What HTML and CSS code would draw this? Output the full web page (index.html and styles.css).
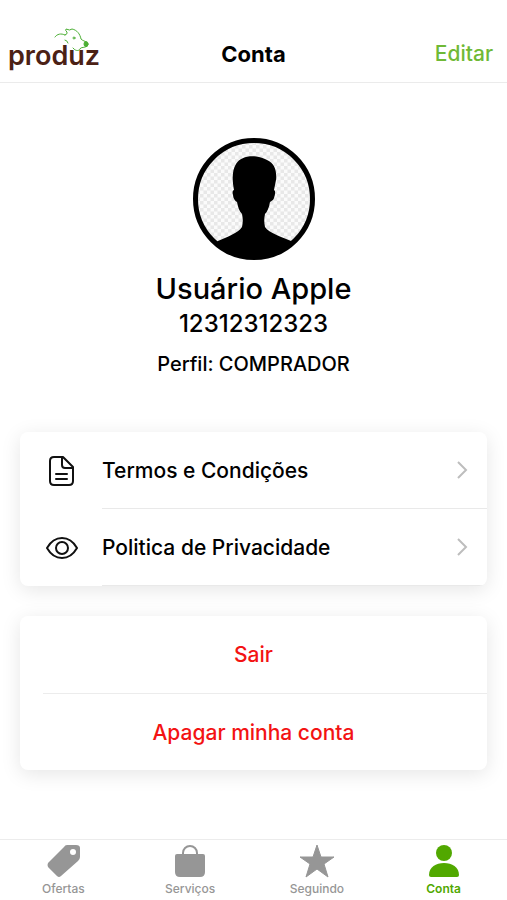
FILE: index.html
```html
<!DOCTYPE html>
<html lang="pt-BR">
<head>
<meta charset="utf-8">
<meta name="viewport" content="width=device-width, initial-scale=1">
<title>Conta</title>
<link rel="stylesheet" href="styles.css">
</head>
<body>
<header class="topbar">
  <div class="logo">
    <span class="logo-word">produz</span>
    <svg class="logo-mark" viewBox="0 0 36 26" aria-hidden="true">
      <path d="M1 10C3 7 7 6 11 8M11 8Q14 7 13 5Q11 4 12 2Q16 4 18 2C23 3 26 7 27 12C29 14 31 14 32 15L34 17Q34 20 31 20C28 21 27 20 26 22C25 24 22 24 20 22L19 21M11 13Q13 13 14 16"/>
      <circle cx="20" cy="11" r="1"/>
      <ellipse class="snout" cx="32" cy="17" rx="2" ry="2.500"/>
    </svg>
  </div>
  <h1 class="title">Conta</h1>
  <button class="edit" type="button">Editar</button>
</header>

<main class="content">
  <section class="profile">
    <svg class="avatar" viewBox="0 0 122 122" aria-hidden="true">
      <defs>
        <pattern id="checks" width="7" height="7" patternUnits="userSpaceOnUse">
          <rect width="7" height="7" fill="#fbfbfb"/>
          <path d="M0 0h3.500v3.500H0zM3.500 3.500h3.500v3.500H3.500z" fill="#e8e8e8"/>
        </pattern>
        <clipPath id="round"><circle cx="61" cy="61" r="59"/></clipPath>
      </defs>
      <circle cx="61" cy="61" r="58" fill="url(#checks)"/>
      <g clip-path="url(#round)">
        <path d="M41 52C39 42 39 32 43 26C47 19 57 17 66 19C70 20 72 21 74 22C82 25 84 34 83 42L81 52C83 53 82 57 81 60C80 63 78 63 77 64C76 70 74 74 72 76C71 80 71 85 72 89C76 95 89 99 98 103C103 106 106 112 107 122H16C18 112 20 106 25 103C34 99 45 95 49 89C50 85 50 80 49 76C46 73 45 69 44 64C42 63 40 60 40 57C39 54 40 52 41 52Z"/>
      </g>
      <circle cx="61" cy="61" r="58.500" fill="none" stroke="#000" stroke-width="5"/>
    </svg>
    <h2 class="name">Usuário Apple</h2>
    <p class="number">12312312323</p>
    <p class="role">Perfil: COMPRADOR</p>
  </section>

  <nav class="card">
    <a class="row" href="#termos">
      <svg class="row-icon" viewBox="0 0 32 32" aria-hidden="true">
        <path d="M17 2H8Q4 2 4 6V26Q4 30 8 30H23Q27 30 27 26V12ZM16 2V10Q16 13 19 13H27M10 19H21M10 24H21"/>
      </svg>
      <span class="row-label">Termos e Condições
        <svg class="chevron" viewBox="0 0 12 18" aria-hidden="true"><path d="M2 1L10 9L2 17"/></svg>
      </span>
    </a>
    <a class="row" href="#privacidade">
      <svg class="row-icon" viewBox="0 0 32 32" aria-hidden="true">
        <path d="M1 16C5 9 10 6 16 6S27 9 31 16C27 23 22 26 16 26S5 23 1 16Z"/><circle cx="16" cy="16" r="6"/>
      </svg>
      <span class="row-label">Politica de Privacidade
        <svg class="chevron" viewBox="0 0 12 18" aria-hidden="true"><path d="M2 1L10 9L2 17"/></svg>
      </span>
    </a>
  </nav>

  <section class="card actions">
    <button class="action" type="button">Sair</button>
    <button class="action" type="button">Apagar minha conta</button>
  </section>
</main>

<nav class="tabs">
  <a class="tab" href="#ofertas">
    <svg class="tab-icon" viewBox="0 0 36 36" aria-hidden="true"><path fill-rule="evenodd" d="M22 2H31Q35 2 35 5V14Q35 16 33 18L16 33Q14 35 12 33L3 24Q2 22 3 20L19 4Q20 2 22 2ZM28 6A3 3 0 1 0 28 12A3 3 0 1 0 28 6Z"/></svg>
    Ofertas
  </a>
  <a class="tab" href="#servicos">
    <svg class="tab-icon" viewBox="0 0 36 36" aria-hidden="true"><path d="M5 11H31Q33 11 33 13V29Q33 34 28 34H8Q3 34 3 29V13Q3 11 5 11Z"/><path class="handle" d="M11 12V10A7 7 0 0 1 25 10V12"/></svg>
    Serviços
  </a>
  <a class="tab" href="#seguindo">
    <svg class="tab-icon" viewBox="0 0 36 36" aria-hidden="true"><path class="star" d="M18 2L22 14H35L25 21L29 34L18 26L7 34L11 21L1 14H14Z"/></svg>
    Seguindo
  </a>
  <a class="tab tab-active" href="#conta" aria-current="page">
    <svg class="tab-icon" viewBox="0 0 36 36" aria-hidden="true"><circle cx="18" cy="10" r="8"/><path d="M3 32C3 24 10 20 18 20S33 24 33 32Q33 34 31 34H5Q3 34 3 32Z"/></svg>
    Conta
  </a>
</nav>
</body>
</html>
```
FILE: styles.css
```css
* { box-sizing: border-box; }

body {
  margin: 0;
  min-height: 100vh;
  display: flex;
  flex-direction: column;
  background: #fff;
  color: #000;
  font-family: Inter, "Liberation Sans", sans-serif;
  font-weight: 500;
}

h1, h2, p { margin: 0; font-weight: 500; }
a { color: inherit; text-decoration: none; }
button { border: 0; padding: 0; background: none; font: inherit; cursor: pointer; }

.topbar {
  display: grid;
  grid-template-columns: 1fr auto 1fr;
  align-items: center;
  padding: 26px 8px 0;
  height: 83px;
  border-bottom: 1px solid #ebebeb;
}

.logo { position: relative; width: 90px; padding-top: 4px; }
.logo-word { color: #4b2115; font-size: 27px; line-height: 32px; font-weight: 600; }
.logo-mark {
  position: absolute;
  top: -9px;
  right: 8px;
  width: 36px;
  height: 26px;
  fill: none;
  stroke: #4caf35;
  stroke-linecap: round;
  stroke-linejoin: round;
}
.snout { fill: #4caf35; }

.title { font-size: 22px; line-height: 28px; font-weight: 700; }
.edit { justify-self: end; margin-right: 6px; color: #6fb936; font-size: 21px; line-height: 28px; }

.content { padding: 55px 20px 32px; }

.profile { display: flex; flex-direction: column; align-items: center; text-align: center; }
.avatar { width: 122px; height: 122px; }
.name { margin-top: 10px; font-size: 29px; line-height: 38px; }
.number { font-size: 24px; line-height: 32px; }
.role { margin-top: 8px; font-size: 20px; line-height: 32px; }

.card {
  margin-top: 52px;
  border-radius: 8px;
  background: #fff;
  box-shadow: 0 4px 20px rgba(0, 0, 0, 0.1);
  overflow: hidden;
}
.actions { margin-top: 30px; }

.row { display: flex; align-items: center; height: 77px; padding-left: 26px; }
.row-icon {
  flex: none;
  width: 32px;
  height: 32px;
  margin-right: 24px;
  fill: none;
  stroke: #111;
  stroke-width: 2;
  stroke-linejoin: round;
  stroke-linecap: round;
}
.row-label {
  flex: 1;
  align-self: stretch;
  display: flex;
  align-items: center;
  justify-content: space-between;
  padding-right: 19px;
  border-bottom: 1px solid #e9e9e9;
  font-size: 21px;
}
.chevron { width: 12px; height: 18px; fill: none; stroke: #bdbdbd; stroke-width: 2; }

.action { display: block; width: 100%; height: 77px; color: #f31313; font-size: 21px; }
.action + .action {
  border-top: 1px solid;
  border-image: linear-gradient(to right, transparent 24px, #ececec 24px) 1;
}

.tabs {
  margin-top: auto;
  display: grid;
  grid-template-columns: repeat(4, 1fr);
  padding: 3px 0 1px;
  border-top: 1px solid #ececec;
  color: #969696;
}
.tab {
  display: flex;
  flex-direction: column;
  align-items: center;
  font-size: 12px;
  line-height: 20px;
}
.tab-icon { width: 36px; height: 36px; fill: currentColor; }
.handle { fill: none; stroke: currentColor; stroke-width: 2; }
.star { stroke: currentColor; stroke-linejoin: round; }
.tab-active { color: #51a800; font-weight: 600; }
```
